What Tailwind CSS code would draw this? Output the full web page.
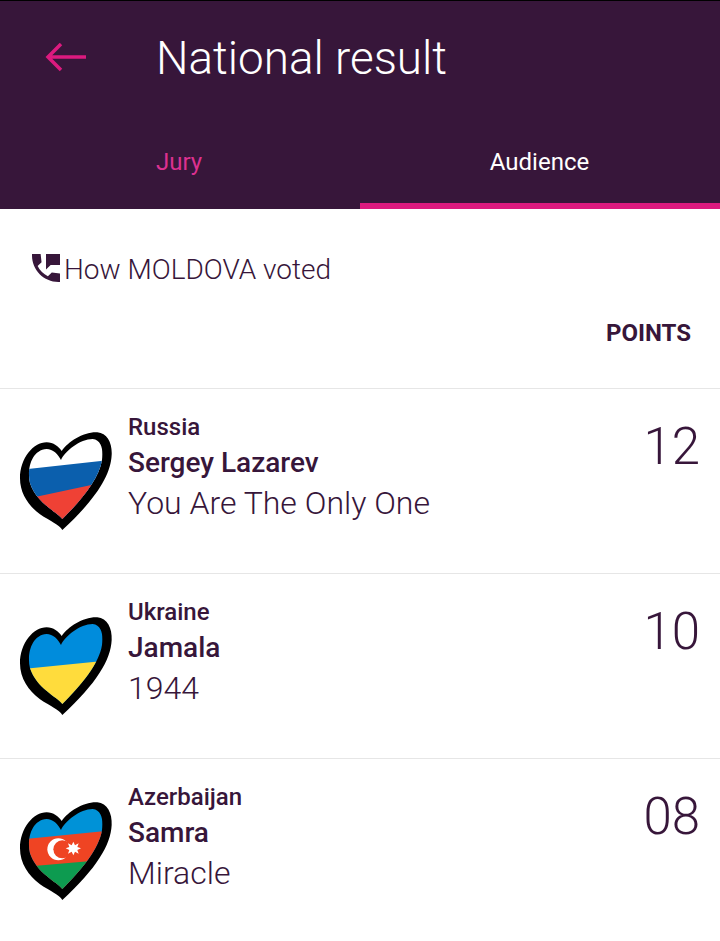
<!DOCTYPE html>
<html lang="en">
<head>
  <meta charset="UTF-8">
  <title>National result</title>
  <script src="https://cdn.jsdelivr.net/npm/@tailwindcss/browser@4"></script>
</head>
<body class="bg-white font-['Roboto',sans-serif] text-[#37163a] w-[720px] h-[941px] overflow-hidden">

  <header class="bg-[#37163a] border-t border-black h-[209px] flex flex-col">
    <div class="flex items-center h-[114px] pl-[45px]">
      <svg width="41" height="30" viewBox="0 0 41 30" fill="none" stroke="#dc1a7f" stroke-width="3.5"><path d="M41 14H3M16 1L3 14L16 27"/></svg>
      <h1 class="ml-[70px] mt-[2px] text-[45.8px] font-light text-white leading-none">National result</h1>
    </div>
    <div class="flex flex-1 text-2xl">
      <div class="w-1/2 flex items-center justify-center text-[#dc3190] pr-[2px]">Jury</div>
      <div class="w-1/2 flex items-center justify-center text-white border-b-[6px] border-[#dc1a7f] pt-[6px] pr-[1px]">Audience</div>
    </div>
  </header>

  <section class="h-[179px]">
    <div class="flex items-center pl-[32px] pt-[43px]">
      <svg width="28" height="28" viewBox="3 3 18 18" fill="#37163a"><path d="M21 15.46l-5.27-.61-2.52 2.52c-2.83-1.44-5.15-3.75-6.59-6.59l2.53-2.53L8.54 3H3.03C2.45 13.18 10.82 21.55 21 20.97v-5.51zM12 3v10l3-3h6V3h-9z"/></svg>
      <span class="ml-[4px] text-[28px] font-light leading-none mt-[4px]">How MOLDOVA voted</span>
    </div>
    <div class="text-right pr-[29px] mt-[37px] text-2xl font-bold leading-none">POINTS</div>
  </section>

  <!-- Russia -->
  <article class="h-[185px] border-t border-[#e6e6e6] flex">
    <svg class="mt-[21px] shrink-0" width="128" height="130" viewBox="0 -15 384 390">
      <defs><clipPath id="heart-ru"><path d="M187 312C170 290 110 265 90 205C80 165 93 105 140 102C158 102 175 118 183 135C195 108 240 72 278 72C307 75 310 110 306 135C298 190 245 255 187 312Z"/></clipPath></defs>
      <path d="M187 345C178 330 150 318 120 298C85 272 60 235 60 190C60 130 100 82 140 82C160 82 176 95 185 108C205 80 250 50 292 52C322 55 337 85 335 120C332 180 290 250 187 345Z"/>
      <g clip-path="url(#heart-ru)">
        <rect width="420" height="390" fill="#fff"/>
        <polygon points="60,165 340,134 340,360 60,360" fill="#0b5fad"/>
        <polygon points="60,256 340,196 340,360 60,360" fill="#ef4135"/>
      </g>
    </svg>
    <div class="pt-[22px] flex-1">
      <p class="text-[24px] font-medium leading-[32px]">Russia</p>
      <p class="text-[28px] font-medium leading-[40px]">Sergey Lazarev</p>
      <p class="text-[32px] font-light leading-[41px]">You Are The Only One</p>
    </div>
    <div class="pr-[20px] pt-[23px] text-[51px] font-light leading-[70px]">12</div>
  </article>

  <!-- Ukraine -->
  <article class="h-[185px] border-t border-[#e6e6e6] flex">
    <svg class="mt-[21px] shrink-0" width="128" height="130" viewBox="0 -15 384 390">
      <defs><clipPath id="heart-ua"><path d="M187 312C170 290 110 265 90 205C80 165 93 105 140 102C158 102 175 118 183 135C195 108 240 72 278 72C307 75 310 110 306 135C298 190 245 255 187 312Z"/></clipPath></defs>
      <path d="M187 345C178 330 150 318 120 298C85 272 60 235 60 190C60 130 100 82 140 82C160 82 176 95 185 108C205 80 250 50 292 52C322 55 337 85 335 120C332 180 290 250 187 345Z"/>
      <g clip-path="url(#heart-ua)">
        <rect width="420" height="390" fill="#008cdc"/>
        <polygon points="60,208 340,180 340,360 60,360" fill="#ffdc3c"/>
      </g>
    </svg>
    <div class="pt-[22px] flex-1">
      <p class="text-[24px] font-medium leading-[32px]">Ukraine</p>
      <p class="text-[28px] font-medium leading-[40px]">Jamala</p>
      <p class="text-[32px] font-light leading-[41px]">1944</p>
    </div>
    <div class="pr-[20px] pt-[23px] text-[51px] font-light leading-[70px]">10</div>
  </article>

  <!-- Azerbaijan -->
  <article class="h-[185px] border-t border-[#e6e6e6] flex">
    <svg class="mt-[21px] shrink-0" width="128" height="130" viewBox="0 -15 384 390">
      <defs><clipPath id="heart-az"><path d="M187 312C170 290 110 265 90 205C80 165 93 105 140 102C158 102 175 118 183 135C195 108 240 72 278 72C307 75 310 110 306 135C298 190 245 255 187 312Z"/></clipPath></defs>
      <path d="M187 345C178 330 150 318 120 298C85 272 60 235 60 190C60 130 100 82 140 82C160 82 176 95 185 108C205 80 250 50 292 52C322 55 337 85 335 120C332 180 290 250 187 345Z"/>
      <g clip-path="url(#heart-az)">
        <rect width="420" height="390" fill="#0092d7"/>
        <polygon points="60,164 340,136 340,360 60,360" fill="#ef4423"/>
        <polygon points="60,247 340,222 340,360 60,360" fill="#0d9b50"/>
      </g>
      <circle cx="175" cy="193" r="33" fill="#fff"/>
      <circle cx="187" cy="193" r="27" fill="#ef4423"/>
      <polygon points="220,170 225,181 236,175 232,186 243,190 232,195 236,206 225,200 220,211 215,200 204,206 208,195 197,190 208,186 204,175 215,181" fill="#fff"/>
    </svg>
    <div class="pt-[22px] flex-1">
      <p class="text-[24px] font-medium leading-[32px]">Azerbaijan</p>
      <p class="text-[28px] font-medium leading-[40px]">Samra</p>
      <p class="text-[32px] font-light leading-[41px]">Miracle</p>
    </div>
    <div class="pr-[20px] pt-[23px] text-[51px] font-light leading-[70px]">08</div>
  </article>
</body>
</html>
